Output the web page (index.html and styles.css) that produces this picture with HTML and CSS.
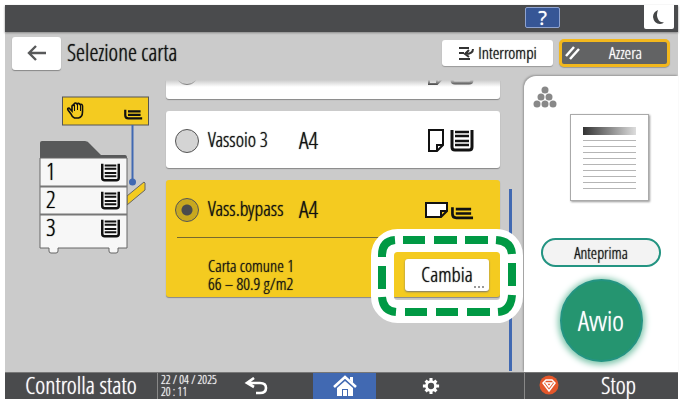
FILE: index.html
```html
<!DOCTYPE html>
<html lang="it">
<head>
  <meta charset="UTF-8">
  <meta name="viewport" content="width=device-width, initial-scale=1.0">
  <title>Selezione carta</title>
  <link rel="stylesheet" href="styles.css">
</head>
<body>

  <!-- shared icons -->
  <svg class="defs" aria-hidden="true">
    <symbol id="tray" viewBox="0 0 24 23">
      <path d="M2 1v17q0 3 3 3h14q3 0 3-3V1" fill="none" stroke="#111" stroke-width="3"/>
      <path d="M5 3h14M5 7h14M5 12h14M5 16h14" stroke="#111" stroke-width="2.4"/>
    </symbol>
    <symbol id="bypass" viewBox="0 0 24 14">
      <path d="M1.500 1v7q0 4 4 4H23" fill="none" stroke="#111" stroke-width="2.800"/>
      <path d="M5 3h16M5 7.500h16" stroke="#111" stroke-width="2.800"/>
    </symbol>
  </svg>

  <div class="screen">
    <header class="topbar">
      <button class="help-btn" aria-label="Guida">?</button>
      <button class="sleep-btn" aria-label="Risparmio energia">
        <svg width="14" height="16" viewBox="0 0 14 16"><path d="M6 1Q1 3 1 8q1 7 7 7 3 0 4-2-4 1-6-3-2-4 0-9z" fill="#444647"/></svg>
      </button>
    </header>

    <div class="titlebar">
      <button class="back-btn" aria-label="Indietro">
        <svg width="20" height="16" viewBox="0 0 20 16"><path d="M9 1L2 8l7 7M2 8h17" fill="none" stroke="#58595a" stroke-width="2.400"/></svg>
      </button>
      <h1>Selezione carta</h1>
      <button class="action-btn">
        <svg width="17" height="15" viewBox="0 0 17 15"><path d="M1 2h10M1 13h11M1 7h5M15 3q0 5-8 5M11 4L7 8l4 3" fill="none" stroke="#333" stroke-width="2"/></svg>
        Interrompi
      </button>
      <button class="action-btn reset-btn">
        <svg width="16" height="14" viewBox="0 0 16 14"><path d="M1 10l8-9M5 13l9-10" stroke="#fff" stroke-width="2.500"/></svg>
        <span>Azzera</span>
      </button>
    </div>

    <main class="content">
      <div class="machine">
        <svg width="110" height="158" viewBox="0 0 110 158">
          <rect x="23.500" y="1" width="86" height="28" fill="#f4cb20" stroke="#555"/>
          <path d="M32 18l-3-4q-1-2 1-2l3 3v-5q1-2 2 0V8q1.500-2 3 0 1.500-1.500 3 .5 2-1 2.500 1.500v6q0 5-4 6h-4q-2.500-1-3.500-4z" fill="none" stroke="#111" stroke-width="1.600"/>
          <path d="M35.500 9v6M38.500 8v6M41.500 9v6" stroke="#111"/>
          <use href="#bypass" x="85" y="13" width="19" height="11"/>
          <path d="M93.500 29v56" stroke="#4169b2" stroke-width="2"/>
          <circle cx="93.500" cy="86" r="3.500" fill="#4169b2"/>
          <path d="M88 100l17-14 1 1v7l-18 15z" fill="#f4cb20" stroke="#666"/>
          <path d="M1 62V47q0-2 2-2h43q3 0 5 3l11 11h24q2 0 2 3z" fill="#58595a"/>
          <path d="M1 62h87v90H79v3q0 2-2 2h-5q-2 0-2-2v-3H19v3q0 2-2 2h-5q-2 0-2-2v-3H1z" fill="#f7f7f7" stroke="#666"/>
          <path d="M1 90.500h87M1 118.500h87" stroke="#777" stroke-width="2"/>
          <use href="#tray" x="61" y="67" width="21" height="19"/>
          <use href="#tray" x="61" y="95" width="21" height="19"/>
          <use href="#tray" x="61" y="123" width="21" height="19"/>
          <g class="tray-number">
            <text x="7" y="84">1</text>
            <text x="7" y="112">2</text>
            <text x="7" y="140">3</text>
          </g>
        </svg>
      </div>

      <form class="tray-list">
        <div class="peek">
          <div class="tray-row">
            <input type="radio" name="tray" aria-label="Vassoio 2">
            <span class="icons">
              <svg width="16" height="23" viewBox="0 0 16 23"><path d="M1 1h14v15l-6 6H1zM15 16H9v6" fill="#fff" stroke="#111" stroke-width="2"/></svg>
              <svg width="24" height="23"><use href="#tray"/></svg>
            </span>
          </div>
        </div>

        <div class="card tray-row">
          <input type="radio" name="tray" id="tray3">
          <label for="tray3">Vassoio 3</label>
          <span class="size">A4</span>
          <span class="icons">
            <svg width="16" height="23" viewBox="0 0 16 23"><path d="M1 1h14v15l-6 6H1zM15 16H9v6" fill="#fff" stroke="#111" stroke-width="2"/></svg>
            <svg width="24" height="23"><use href="#tray"/></svg>
          </span>
        </div>

        <div class="card selected">
          <div class="tray-row">
            <input type="radio" name="tray" id="bypassTray" checked>
            <label for="bypassTray">Vass.bypass</label>
            <span class="size">A4</span>
            <span class="icons">
              <svg width="23" height="16" viewBox="0 0 23 16"><path d="M1 1h21v8l-6 6H1zM22 9h-6v6" fill="#fff" stroke="#111" stroke-width="2"/></svg>
              <svg class="low" width="23" height="14"><use href="#bypass"/></svg>
            </span>
          </div>
          <div class="details">
            <p>Carta comune 1<br>66 – 80.9 g/m2</p>
            <div class="change">
              <button type="button" class="change-btn">Cambia<span class="dots" aria-hidden="true"></span></button>
              <svg class="callout" width="152" height="96" viewBox="0 0 152 96">
                <rect x="11.500" y="12.500" width="129" height="71" rx="15" fill="none" stroke="#fff" stroke-width="23"/>
                <path d="M11 29v-2Q11 13 24 12M32 12h22M63 12h23M94 12h23M125 12Q140 13 141 26M141 35v23M141 67Q140 83 127 84M119 84H96M87 84H65M56 84H34M25 84Q12 83 11 69M11 61V38" fill="none" stroke="#009944" stroke-width="8"/>
              </svg>
            </div>
          </div>
        </div>
      </form>

      <div class="scroll"></div>

      <aside class="panel">
        <svg class="toner" width="24" height="22" viewBox="0 0 24 22">
          <g fill="#888"><circle cx="12" cy="4" r="3.500"/><circle cx="8" cy="11" r="3.500"/><circle cx="16" cy="11" r="3.500"/><circle cx="4" cy="18" r="3.500"/><circle cx="12" cy="18" r="3.500"/><circle cx="20" cy="18" r="3.500"/></g>
        </svg>
        <div class="page">
          <div class="page-head"></div>
          <div class="page-lines"></div>
        </div>
        <button class="preview-btn">Anteprima</button>
        <button class="start-btn">Avvio</button>
      </aside>
    </main>

    <footer class="bottombar">
      <button class="status-btn">Controlla stato</button>
      <time datetime="2025-04-22T20:11">22 / 04 / 2025<br>20 : 11</time>
      <nav>
        <button class="undo-btn" aria-label="Torna indietro">
          <svg width="24" height="18" viewBox="0 0 24 18"><path d="M10 1L3 6l7 4M4 6h12q6 0 6 5t-6 5h-4" fill="none" stroke="#fff" stroke-width="2.600"/></svg>
        </button>
        <button class="home-btn" aria-label="Home">
          <svg width="26" height="22" viewBox="0 0 26 22"><path d="M2 12L13 2l11 10" fill="none" stroke="#fff" stroke-width="2.600"/><path d="M18 2h3v6l-3-3zM13 6l8 7v8h-5v-7h-6v7H5v-8zM11 15h4v6h-4z" fill="#fff"/></svg>
        </button>
        <button aria-label="Impostazioni">
          <svg width="18" height="18" viewBox="0 0 20 20"><circle cx="10" cy="10" r="5" fill="none" stroke="#fff" stroke-width="3"/><path d="M10 1v4M10 15v4M1 10h4M15 10h4M4 4l2 2M14 14l2 2M4 16l2-2M14 6l2-2" stroke="#fff" stroke-width="3.400"/></svg>
        </button>
      </nav>
      <button class="stop-btn">
        <svg width="20" height="20" viewBox="0 0 20 20"><circle cx="10" cy="10" r="9.500" fill="#e4572b"/><path d="M7 5h6l3 3-6 8-6-8zM7 8h6l-3 4z" fill="none" stroke="#fff" stroke-width="1.500"/></svg>
        <span>Stop</span>
      </button>
    </footer>
  </div>

</body>
</html>
```

FILE: styles.css
```css
* {
  box-sizing: border-box;
}
body {
  margin: 0;
  padding: 5px 6px 5px 5px;
  min-height: 100vh;
  display: flex;
  background: #fff;
  color: #111;
  font-family: 'Open Sans Condensed Light', 'Roboto Condensed', 'Open Sans', sans-serif;
  text-shadow: 0 0 1px currentColor;
}
button {
  font: inherit;
  color: inherit;
  text-shadow: 0 0 1px currentColor;
  border: none;
  padding: 0;
  cursor: pointer;
}
.defs {
  position: absolute;
  width: 0;
  height: 0;
}
.screen {
  flex: 1;
  display: flex;
  flex-direction: column;
  background: #cbcbcb;
}

/* top bar */
.topbar {
  height: 27px;
  background: #4a4b4d;
  display: flex;
  justify-content: flex-end;
  gap: 84px;
  padding-right: 4px;
  box-shadow: 0 1px 2px #888;
}
.help-btn {
  width: 35px;
  height: 21px;
  margin-top: 2px;
  background: #365696;
  border: 1px solid #8fa3cf;
  border-radius: 2px;
  color: #fff;
  font-family: 'Open Sans', sans-serif;
  font-size: 20px;
  line-height: 18px;
}
.sleep-btn {
  width: 30px;
  height: 24px;
  background: #fff;
  border-radius: 0 0 2px 2px;
  display: grid;
  place-items: center;
}

/* title row */
.titlebar {
  height: 44px;
  display: flex;
  align-items: center;
  gap: 6px;
  padding: 0 8px 2px 7px;
}
.back-btn {
  width: 49px;
  height: 33px;
  background: #fff;
  border-radius: 3px;
  box-shadow: 0 1px 1px #888;
  display: grid;
  place-items: center;
}
.titlebar h1 {
  flex: 1;
  margin: 0;
  padding-bottom: 2px;
  font-size: 23px;
  font-weight: normal;
  line-height: 32px;
}
.action-btn {
  width: 111px;
  height: 26px;
  background: #fff;
  border-radius: 3px;
  box-shadow: 0 1px 1px #999;
  font-size: 17px;
  line-height: 24px;
  display: flex;
  align-items: center;
  justify-content: center;
  gap: 3px;
}
.reset-btn {
  height: 28px;
  background: #626364;
  border: 3px solid #f3b81d;
  border-radius: 5px;
  color: #fff;
  padding-left: 3px;
}
.reset-btn span {
  flex: 1;
}

/* content */
.content {
  flex: 1;
  display: flex;
}
.machine {
  width: 161px;
  padding: 20px 0 0 34px;
}
.tray-number {
  font-size: 24px;
}
.tray-list {
  flex: 1;
  display: flex;
  flex-direction: column;
  gap: 12px;
  padding-top: 4px;
}
.peek {
  height: 19px;
  overflow: hidden;
  display: flex;
  flex-direction: column;
  justify-content: flex-end;
  background: #fff;
  border-radius: 0 0 3px 3px;
  box-shadow: 0 1px 1px #888;
  position: relative;
}
.peek::after {
  content: '';
  position: absolute;
  inset: 0 0 auto;
  height: 7px;
  background: linear-gradient(#cbcbcb, transparent);
}
.card {
  background: #fff;
  border-radius: 3px;
  box-shadow: 0 1px 1px #888;
}
.tray-row {
  flex: none;
  height: 57px;
  display: flex;
  align-items: center;
  padding: 2px 26px 0 9px;
}
.peek .tray-row {
  height: 54px;
}
.tray-row input {
  appearance: none;
  width: 24px;
  height: 24px;
  margin: 0 9px 0 0;
  border: 1px solid #555;
  border-radius: 50%;
  background: #d4d4d4;
}
.tray-row input:checked {
  background: radial-gradient(circle, #4a4b4d 5px, #c8a81f 6px);
}
.tray-row label {
  width: 91px;
  font-size: 20px;
  line-height: 24px;
  padding-bottom: 2px;
}
.tray-row .size {
  font-size: 24px;
  line-height: 28px;
  padding-bottom: 2px;
}
.icons {
  margin-left: auto;
  display: flex;
  align-items: center;
  gap: 6px;
}
.selected .icons {
  gap: 3px;
}
.low {
  margin-top: 6px;
}
.selected {
  background: #f4cb20;
}
.details {
  height: 60px;
  margin-left: 11px;
  padding: 0 11px 0 31px;
  border-top: 1px solid #77692e;
  display: flex;
  align-items: center;
  justify-content: space-between;
}
.details p {
  margin: 14px 0 0;
  font-size: 17px;
  line-height: 18px;
}
.change {
  position: relative;
  margin-top: 14px;
}
.change-btn {
  display: block;
  position: relative;
  width: 84px;
  height: 32px;
  padding-bottom: 2px;
  background: #fff;
  border-radius: 3px;
  box-shadow: 0 1px 2px #777;
  font-size: 21px;
  line-height: 26px;
}
.dots {
  position: absolute;
  right: 5px;
  bottom: 3px;
  width: 10px;
  height: 2px;
  background: repeating-linear-gradient(90deg, #999 0 2px, transparent 2px 4px);
}
.callout {
  position: absolute;
  top: -31px;
  left: -34px;
  z-index: 2;
  pointer-events: none;
}
.scroll {
  width: 3px;
  margin: 113px 12px 1px 9px;
  background: #4169b2;
}

/* right panel */
.panel {
  width: 154px;
  background: #fff;
  border-radius: 12px 0 0 0;
  box-shadow: -1px -1px 2px #999;
  display: flex;
  flex-direction: column;
  align-items: center;
  padding-top: 10px;
}
.toner {
  align-self: flex-start;
  margin-left: 9px;
}
.page {
  width: 79px;
  height: 87px;
  margin: 6px 0 0 16px;
  padding: 12px;
  border: 1px solid #aaa;
  box-shadow: 1px 1px 2px #999;
}
.page-head {
  height: 8px;
  background: linear-gradient(90deg, #333, #ddd);
}
.page-lines {
  height: 49px;
  margin-top: 5px;
  background: repeating-linear-gradient(#b5b5b5 0 1px, transparent 1px 6px);
}
.preview-btn {
  width: 120px;
  height: 29px;
  margin-top: 37px;
  background: #f3f3f3;
  border: 2px solid #249482;
  border-radius: 15px;
  font-size: 16px;
  line-height: 24px;
}
.start-btn {
  width: 83px;
  height: 83px;
  margin-top: 12px;
  padding-bottom: 2px;
  background: #259570;
  border: 2px solid #249482;
  border-radius: 50%;
  box-shadow: 0 1px 6px 2px #7dc5ab;
  color: #fff;
  font-size: 28px;
}

/* bottom bar */
.bottombar {
  height: 27px;
  background: #4a4b4d;
  border-top: 1px solid #777;
  color: #fff;
  display: flex;
}
.bottombar button {
  background: none;
  display: grid;
  place-items: center;
  line-height: 24px;
}
.bottombar .status-btn {
  width: 153px;
  padding-bottom: 2px;
  font-size: 24px;
  border-right: 1px solid #888;
}
.bottombar time {
  width: 60px;
  padding: 1px 0 0 3px;
  font-size: 12px;
  line-height: 12px;
  white-space: nowrap;
}
.bottombar nav {
  flex: 1;
  display: grid;
  grid-template-columns: 95px 63px 1fr;
  padding-right: 39px;
}
.bottombar .undo-btn {
  padding-right: 20px;
}
.bottombar .home-btn {
  background: #4169b2;
}
.bottombar .stop-btn {
  width: 154px;
  border-left: 1px solid #888;
  padding: 0 0 2px 14px;
  display: flex;
  align-items: center;
  font-size: 24px;
}
.stop-btn span {
  flex: 1;
}
```
